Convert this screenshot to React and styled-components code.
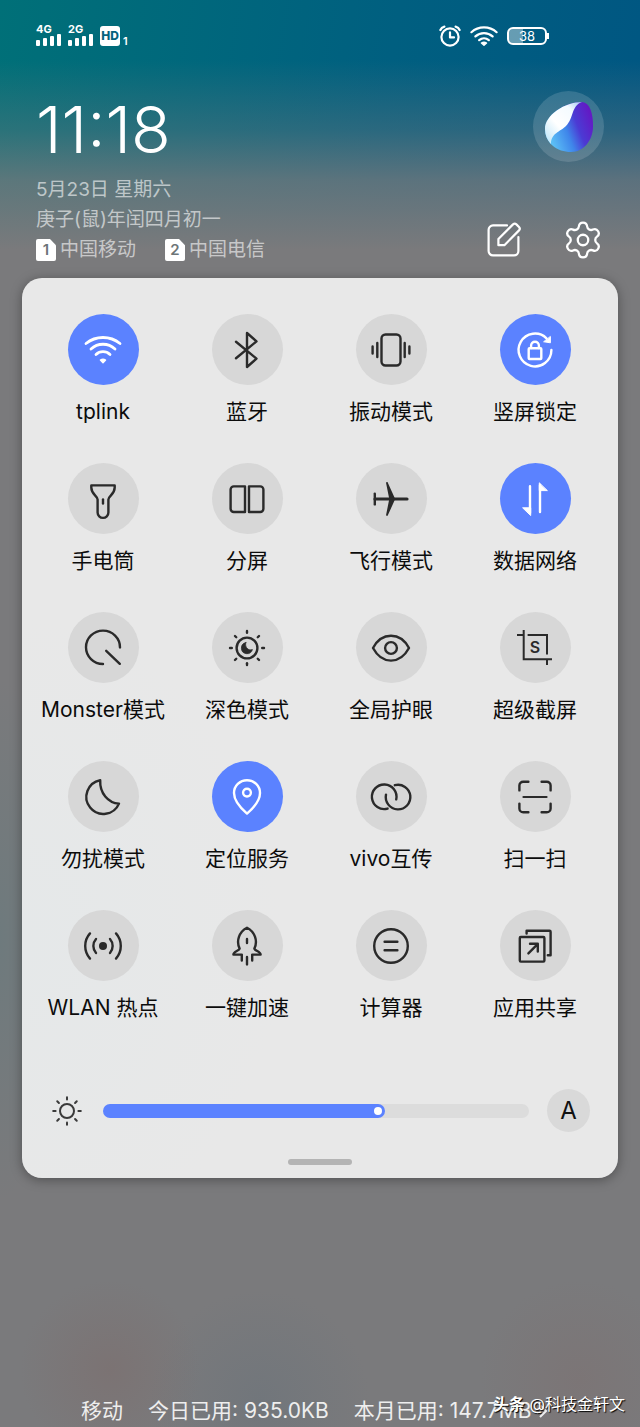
import { useState } from "react";
import styled, { createGlobalStyle } from "styled-components";
import { Settings } from "lucide-react";

const TILES = [
  { id: "wifi", label: "tplink", on: true },
  { id: "bluetooth", label: "蓝牙" },
  { id: "vibrate", label: "振动模式" },
  { id: "rotation", label: "竖屏锁定", on: true },
  { id: "torch", label: "手电筒" },
  { id: "split", label: "分屏" },
  { id: "plane", label: "飞行模式" },
  { id: "data", label: "数据网络", on: true },
  { id: "monster", label: "Monster模式" },
  { id: "dark", label: "深色模式" },
  { id: "eye", label: "全局护眼" },
  { id: "capture", label: "超级截屏" },
  { id: "dnd", label: "勿扰模式" },
  { id: "location", label: "定位服务", on: true },
  { id: "share", label: "vivo互传" },
  { id: "scan", label: "扫一扫" },
  { id: "hotspot", label: "WLAN 热点" },
  { id: "boost", label: "一键加速" },
  { id: "calc", label: "计算器" },
  { id: "cast", label: "应用共享" },
];

const RAYS = [0, 45, 90, 135, 180, 225, 270, 315];

// every glyph is drawn around 0,0 in a 44px box
const GLYPHS = {
  wifi: (
    <g strokeWidth="2.8">
      <path d="M-17 -6.5A27 27 0 0 1 17 -6.5M-12 -1A17.5 17.5 0 0 1 12 -1M-7 4.5A10 10 0 0 1 7 4.5" />
      <path
        d="M-2.6 10Q0 8.4 2.6 10L0 12.8Z"
        fill="currentColor"
        strokeWidth="1.4"
      />
    </g>
  ),
  bluetooth: <path d="M-11 -8.2L9.5 8.6L0 17V-17L9.5 -8.6L-11 8.2" />,
  vibrate: (
    <>
      <rect x="-9.5" y="-15.5" width="19" height="31" rx="4" />
      <path d="M-13.7 -7V7M13.7 -7V7M-18.4 -3.5V3.5M18.4 -3.5V3.5" />
    </>
  ),
  rotation: (
    <>
      <path d="M16.4 0A16.4 16.4 0 1 1 11.5 -11.7" />
      <path
        d="M15.4 -13.2L15.4 -7.2L9 -8.2Z"
        fill="currentColor"
        strokeWidth="1"
      />
      <rect x="-6.3" y="-1.8" width="12.6" height="10.8" rx="0.8" />
      <path d="M-3.9 -2V-4.4A3.9 3.9 0 0 1 3.9 -4.4V-2" />
    </>
  ),
  torch: (
    <>
      <path d="M-11.7 -13.6H11.7V-11.5C11.7 -4.5 5.4 -3 5.4 0.5V13.5A5.4 5.4 0 0 1 -5.4 13.5V0.5C-5.4 -3 -11.7 -4.5 -11.7 -11.5Z" />
      <path d="M0 0.5V4.5" />
    </>
  ),
  split: (
    <path d="M-2 -12.6H-13.2A3.2 3.2 0 0 0 -16.4 -9.4V9.8A3.2 3.2 0 0 0 -13.2 13H-2ZM2 -12.6H13.2A3.2 3.2 0 0 1 16.4 -9.4V9.8A3.2 3.2 0 0 1 13.2 13H2Z" />
  ),
  plane: (
    <>
      <path d="M-16 0H16" strokeWidth="3.2" />
      <path d="M-16.2 -5.4V5.4" />
      <path
        d="M-4 -16L2.8 -1V1L-4 16L-1 1V-1Z"
        fill="currentColor"
        strokeWidth="1.8"
      />
    </>
  ),
  data: (
    <>
      <path d="M-5 -12.8V14M5 13V-14" />
      <path
        d="M-4.3 16.2V8.8H-12ZM4.3 -15.8V-8.4H12Z"
        fill="currentColor"
        strokeWidth="1"
      />
    </>
  ),
  monster: <path d="M17 -0.6A17 16.7 0 1 0 0 16M3.2 2.8L16.8 15.8" />,
  dark: (
    <>
      <circle r="10.4" />
      <path
        d="M-1.2 -5.4A5.6 5.6 0 1 0 5.4 1.6C1.6 3 -2.6 -0.4 -1.2 -5.4Z"
        fill="currentColor"
        strokeWidth="0.8"
      />
      {RAYS.map((a) => (
        <path key={a} d="M0 -15.2V-17" transform={`rotate(${a})`} />
      ))}
    </>
  ),
  eye: (
    <>
      <path d="M-18 0C-14 -7.4 -7.6 -12.2 0 -12.2S14 -7.4 18 0C14 7.4 7.6 12.6 0 12.6S-14 7.4 -18 0Z" />
      <circle r="5.9" />
    </>
  ),
  capture: (
    <>
      <g strokeLinecap="butt" strokeLinejoin="miter" strokeWidth="2">
        <path d="M-18 -13H-11M-7.4 -13H12V6.4M12 12V17M-11.3 -18V11.3H17" />
      </g>
      <text y="5.4" textAnchor="middle">
        S
      </text>
    </>
  ),
  dnd: (
    <path d="M-2.8 -16.8A17 17 0 1 0 16 6.6C5 5.8 -3.4 -4 -2.8 -16.8Z" />
  ),
  location: (
    <>
      <path d="M0 16.6C-4.6 12.6 -13 4.4 -13 -4A13 12.8 0 0 1 13 -4C13 4.4 4.6 12.6 0 16.6Z" />
      <circle cy="-4.4" r="3.9" />
    </>
  ),
  share: (
    <path d="M5.2 2.4A12.3 12.3 0 1 0 -3.4 11.6M-5 -2.4A12.3 12.3 0 1 0 3.8 -11.8" />
  ),
  scan: (
    <>
      <path d="M-15.6 -6.6V-11.4A3.8 3.8 0 0 1 -11.8 -15.2H-6.6M6.6 -15.2H11.8A3.8 3.8 0 0 1 15.6 -11.4V-6.6M15.6 6.6V11.4A3.8 3.8 0 0 1 11.8 15.2H6.6M-6.6 15.2H-11.8A3.8 3.8 0 0 1 -15.6 11.4V6.6" />
      <path d="M-11.6 0H11.6" strokeWidth="2" />
    </>
  ),
  hotspot: (
    <>
      <circle r="4" fill="currentColor" stroke="none" />
      <path d="M-7 -7A10.6 10.6 0 0 0 -7 7M7 -7A10.6 10.6 0 0 1 7 7M-13 -12.6A19 19 0 0 0 -13 12.6M13 -12.6A19 19 0 0 1 13 12.6" />
    </>
  ),
  boost: (
    <>
      <path d="M-5.2 14.6V8.6H-13.6C-13.4 5.4 -8 5 -7.4 2.6C-11 -5 -8 -14 0 -18.2C8 -14 11 -5 7.4 2.6C8 5 13.4 5.4 13.6 8.6H5.2V14.6" />
      <path d="M0 -7V-3M0 11V18.4" />
    </>
  ),
  calc: (
    <>
      <circle r="16.8" />
      <path d="M-6.4 -4.2H6.4M-6.4 4.2H6.4" />
    </>
  ),
  cast: (
    <>
      <rect x="-15.2" y="-9" width="24.6" height="24.6" rx="1" />
      <path d="M-8.4 -12.4V-15.2H14.6Q15.6 -15.2 15.6 -14.2V9.2H12.8" />
      <path d="M-6.6 7.4L2.6 -1.8M-5 -2.2H2.8V5.6" />
    </>
  ),
};

const Glyph = ({ name }) => (
  <GlyphSvg viewBox="-22 -22 44 44" aria-hidden="true">
    {GLYPHS[name]}
  </GlyphSvg>
);

const Signal = ({ type }) => (
  <SignalBox>
    <span>{type}</span>
    <svg width="26" height="12" fill="#fff" aria-hidden="true">
      <rect x="0" y="6" width="4" height="6" rx="1" />
      <rect x="7" y="4" width="4" height="8" rx="1" />
      <rect x="14" y="2" width="4" height="10" rx="1" />
      <rect x="21" y="0" width="4" height="12" rx="1" />
    </svg>
  </SignalBox>
);

const StatusIcons = () => (
  <StatusGroup $gap={9}>
    <LineSvg width="22" height="22" viewBox="0 0 22 22" aria-hidden="true">
      <circle cx="11" cy="12" r="8.6" />
      <path d="M11 7.4V12.4H15M1.4 5Q2.4 2.4 5.4 1.6M20.6 5Q19.6 2.4 16.6 1.6" />
    </LineSvg>
    <LineSvg width="28" height="22" viewBox="-14 -11 28 22" aria-hidden="true">
      <path d="M-12.6 -3.8A19 19 0 0 1 12.6 -3.8M-8.6 0.4A13 13 0 0 1 8.6 0.4M-4.8 4.2A7.4 7.4 0 0 1 4.8 4.2" />
      <path
        d="M-2.6 7Q0 5.4 2.6 7L0 9.2Z"
        fill="currentColor"
        strokeWidth="1.4"
      />
    </LineSvg>
    <Battery>
      <BatteryBody>38</BatteryBody>
      <BatteryCap />
    </Battery>
  </StatusGroup>
);

const Orb = () => (
  <svg width="48" height="50" viewBox="0 0 48 50" aria-hidden="true">
    <defs>
      <linearGradient id="orbBody" x1="0" y1="0.75" x2="1" y2="0.35">
        <stop offset="0.1" stopColor="#5cc0f6" />
        <stop offset="0.45" stopColor="#3f86ea" />
        <stop offset="0.68" stopColor="#4b3bd4" />
        <stop offset="1" stopColor="#6319c4" />
      </linearGradient>
      <linearGradient id="orbWhite" x1="0" y1="1" x2="1" y2="0">
        <stop offset="0" stopColor="#b5e2f8" />
        <stop offset="0.4" stopColor="#ffffff" />
        <stop offset="0.75" stopColor="#f4fbff" />
        <stop offset="1" stopColor="#9fc4f4" />
      </linearGradient>
    </defs>
    <path
      d="M37 0C45 1 48 11 48 24C48 39 38 50 26 50C12 50 0 41 0 27C0 13 20 0 37 0Z"
      fill="url(#orbBody)"
    />
    <path
      d="M37 0C20 0 0 13 0 27C0 33 2 38 6 42C6 31 15 30 21 24C29 16 26 4 37 0Z"
      fill="url(#orbWhite)"
    />
  </svg>
);

const App = () => {
  const [active, setActive] = useState(
    TILES.filter((t) => t.on).map((t) => t.id)
  );
  const [brightness, setBrightness] = useState(65);

  const toggle = (id) =>
    setActive((list) =>
      list.includes(id) ? list.filter((x) => x !== id) : [...list, id]
    );

  return (
    <Screen>
      <GlobalStyle />
      <StatusBar>
        <StatusGroup $gap={6}>
          <Signal type="4G" />
          <Signal type="2G" />
          <Hd>
            <HdBadge>HD</HdBadge>
            <HdIndex>1</HdIndex>
          </Hd>
        </StatusGroup>
        <StatusIcons />
      </StatusBar>

      <Header>
        <div>
          <Clock>11:18</Clock>
          <DateLine>5月23日 星期六</DateLine>
          <DateLine>庚子(鼠)年闰四月初一</DateLine>
          <Carriers>
            <Carrier>
              <SimBadge>1</SimBadge>中国移动
            </Carrier>
            <Carrier>
              <SimBadge>2</SimBadge>中国电信
            </Carrier>
          </Carriers>
        </div>
        <HeaderSide>
          <OrbButton aria-label="Jovi">
            <Orb />
          </OrbButton>
          <Actions>
            <IconButton aria-label="编辑">
              <LineSvg
                width="40"
                height="40"
                viewBox="-20 -20 40 40"
                aria-hidden="true"
              >
                <path d="M3 -14.6H-11A4.4 4.4 0 0 0 -15.4 -10.2V11A4.4 4.4 0 0 0 -11 15.4H10A4.4 4.4 0 0 0 14.4 11V-3" />
                <path d="M-5.6 5.2V-1L9 -15.6Q10.8 -17 12.4 -15.6L15 -13Q16.6 -11.2 15 -9.6L0.4 5.2Z" />
              </LineSvg>
            </IconButton>
            <IconButton aria-label="设置">
              <Settings size={42} strokeWidth={1.3} />
            </IconButton>
          </Actions>
        </HeaderSide>
      </Header>

      <Panel>
        <TileGrid>
          {TILES.map((t) => (
            <Tile
              key={t.id}
              aria-pressed={active.includes(t.id)}
              onClick={() => toggle(t.id)}
            >
              <TileCircle $on={active.includes(t.id)}>
                <Glyph name={t.id} />
              </TileCircle>
              <TileLabel>{t.label}</TileLabel>
            </Tile>
          ))}
        </TileGrid>
        <BrightnessRow>
          <SunSvg viewBox="-15 -15 30 30" aria-hidden="true">
            <circle r="7" />
            {RAYS.map((a) => (
              <path key={a} d="M0 -11.4V-13.8" transform={`rotate(${a})`} />
            ))}
          </SunSvg>
          <Slider
            type="range"
            aria-label="亮度"
            min="0"
            max="100"
            value={brightness}
            onChange={(e) => setBrightness(Number(e.target.value))}
            style={{ "--level": brightness / 100 }}
          />
          <AutoButton aria-label="自动亮度">A</AutoButton>
        </BrightnessRow>
        <Handle />
      </Panel>

      <Usage>
        <span>移动</span>
        <span>今日已用: 935.0KB</span>
        <UsageLink href="#usage">
          本月已用: 147.7MB
          <svg width="8" height="14" viewBox="0 0 8 14" aria-hidden="true">
            <path d="M1 1L7 7L1 13" fill="none" stroke="#eee" strokeWidth="2" />
          </svg>
        </UsageLink>
      </Usage>
      <Watermark>
        <b>头条</b> @科技金轩文
      </Watermark>
    </Screen>
  );
};
export default App;

const GlobalStyle = createGlobalStyle`
  * {
    box-sizing: border-box;
  }
  body {
    margin: 0;
    font-family: Inter, "Noto Sans CJK SC", sans-serif;
  }
  button {
    border: none;
    padding: 0;
    background: none;
    font-family: inherit;
    color: inherit;
    cursor: pointer;
  }
`;

const Screen = styled.main`
  position: relative;
  display: flex;
  flex-direction: column;
  min-height: 100vh;
  overflow: hidden;
  color: #fff;
  background:
    radial-gradient(circle at 110px 1370px, rgba(125, 104, 102, 0.4), transparent 90px),
    radial-gradient(circle at 260px 1400px, rgba(100, 112, 122, 0.4), transparent 110px),
    radial-gradient(circle at 580px 1380px, rgba(125, 112, 112, 0.5), transparent 100px),
    radial-gradient(ellipse 60px 260px at 0 940px, rgba(98, 122, 126, 0.5), transparent),
    linear-gradient(rgba(122, 122, 124, 0) 60px, rgba(122, 122, 124, 0.35) 130px, rgba(122, 122, 124, 0.75) 180px, #7a7a7c 250px),
    linear-gradient(100deg, #007078 0, #005f80 45%, #004f84 100%);
`;

const StatusBar = styled.div`
  display: flex;
  justify-content: space-between;
  align-items: center;
  height: 72px;
  padding: 0 91px 0 36px;
`;
const StatusGroup = styled.div`
  display: flex;
  align-items: center;
  gap: ${(p) => p.$gap}px;
`;
const SignalBox = styled.div`
  display: flex;
  flex-direction: column;
  padding-bottom: 2px;
  font-size: 11px;
  font-weight: 700;
  line-height: 9px;
`;
const Hd = styled.div`
  display: flex;
  align-items: flex-end;
  gap: 3px;
`;
const HdBadge = styled.span`
  width: 20px;
  height: 20px;
  border-radius: 3px;
  background: #fff;
  color: #04627e;
  font-size: 12px;
  font-weight: 800;
  line-height: 20px;
  text-align: center;
`;
const HdIndex = styled.span`
  font-size: 11px;
  font-weight: 600;
  line-height: 10px;
`;
const Battery = styled.div`
  display: flex;
  align-items: center;
`;
const BatteryBody = styled.span`
  width: 40px;
  height: 18px;
  border: 2px solid #fff;
  border-radius: 6px;
  background: linear-gradient(90deg, rgba(255, 255, 255, 0.4) 38%, transparent 38%);
  font-size: 13px;
  line-height: 14px;
  text-align: center;
`;
const BatteryCap = styled.span`
  width: 2px;
  height: 6px;
  background: #fff;
`;

const LineSvg = styled.svg`
  display: block;
  fill: none;
  stroke: currentColor;
  stroke-width: 2.2;
  stroke-linecap: round;
  stroke-linejoin: round;
`;

const Header = styled.header`
  display: flex;
  justify-content: space-between;
  padding: 19px 36px 13px;
`;
const Clock = styled.div`
  margin-bottom: 6px;
  font-size: 65px;
  font-weight: 300;
  line-height: 78px;
`;
const DateLine = styled.div`
  color: rgba(255, 255, 255, 0.6);
  font-size: 19px;
  line-height: 30px;
`;
const Carriers = styled(DateLine)`
  display: flex;
  gap: 29px;
`;
const Carrier = styled.span`
  display: flex;
  align-items: center;
  gap: 4px;
`;
const SimBadge = styled.b`
  width: 20px;
  height: 22px;
  border-radius: 2px;
  background: #fff;
  clip-path: polygon(0 0, 70% 0, 100% 28%, 100% 100%, 0 100%);
  color: #6d7578;
  font-size: 15px;
  font-weight: 600;
  line-height: 22px;
  text-align: center;
`;
const HeaderSide = styled.div`
  display: flex;
  flex-direction: column;
  justify-content: space-between;
  align-items: flex-end;
  padding-bottom: 4px;
`;
const OrbButton = styled.button`
  display: flex;
  justify-content: center;
  align-items: center;
  width: 71px;
  height: 71px;
  border-radius: 50%;
  background: rgba(255, 255, 255, 0.14);
`;
const Actions = styled.div`
  display: flex;
  align-items: center;
  gap: 38px;
`;
const IconButton = styled.button`
  svg {
    display: block;
  }
`;

const Panel = styled.section`
  margin: 0 22px;
  padding: 36px 0 13px;
  border-radius: 20px;
  background: radial-gradient(ellipse 260px 320px at 0 660px, #e5e8e9, #e8e8e8);
  box-shadow: 0 2px 12px rgba(0, 0, 0, 0.35);
  color: #111;
`;
const TileGrid = styled.div`
  display: grid;
  grid-template-columns: repeat(4, 1fr);
  row-gap: 36px;
  padding: 0 11px 0 9px;
`;
const Tile = styled.button`
  display: flex;
  flex-direction: column;
  align-items: center;
  gap: 12px;
`;
const TileCircle = styled.span`
  display: flex;
  justify-content: center;
  align-items: center;
  width: 71px;
  height: 71px;
  border-radius: 50%;
  background: ${(p) => (p.$on ? "#5b82ff" : "#d7d7d7")};
  color: ${(p) => (p.$on ? "#fff" : "#2a2a2a")};
`;
const TileLabel = styled.span`
  color: #0c0c0c;
  font-size: 21px;
  line-height: 30px;
  white-space: nowrap;
`;
const GlyphSvg = styled.svg`
  width: 44px;
  height: 44px;
  fill: none;
  stroke: currentColor;
  stroke-width: 2.4;
  stroke-linecap: round;
  stroke-linejoin: round;

  text {
    fill: currentColor;
    stroke: none;
    font-size: 16px;
    font-weight: 600;
  }
`;

const BrightnessRow = styled.div`
  display: flex;
  align-items: center;
  margin-top: 66px;
  padding: 0 28px 0 30px;
`;
const SunSvg = styled.svg`
  width: 30px;
  height: 30px;
  margin-right: 21px;
  fill: none;
  stroke: #3a3a3a;
  stroke-width: 2;
  stroke-linecap: round;
`;
const Slider = styled.input`
  flex: 1;
  min-width: 0;
  height: 14px;
  margin: 0;
  border-radius: 7px;
  appearance: none;
  background: linear-gradient(
    90deg,
    #5b82ff calc(7px + (100% - 14px) * var(--level)),
    #dcdcdc 0
  );
  cursor: pointer;

  &::-webkit-slider-thumb {
    appearance: none;
    width: 14px;
    height: 14px;
    border: 3px solid #5b82ff;
    border-radius: 50%;
    background: #fff;
  }
`;
const AutoButton = styled.button`
  width: 43px;
  height: 43px;
  margin-left: 18px;
  border-radius: 50%;
  background: #d9d9d9;
  font-size: 24px;
  line-height: 43px;
`;
const Handle = styled.div`
  width: 64px;
  height: 6px;
  margin: 27px auto 0;
  border-radius: 3px;
  background: #b4b4b4;
`;

const Usage = styled.footer`
  display: flex;
  gap: 25px;
  margin-top: auto;
  padding: 0 81px;
  color: #eee;
  font-size: 21px;
  line-height: 32px;
  white-space: nowrap;
`;
const UsageLink = styled.a`
  display: flex;
  align-items: center;
  gap: 8px;
  color: inherit;
  text-decoration: none;
`;
const Watermark = styled.div`
  position: absolute;
  right: 15px;
  bottom: 11px;
  font-size: 16px;
  line-height: 24px;
  text-shadow: 1px 1px 1px #000;
`;
